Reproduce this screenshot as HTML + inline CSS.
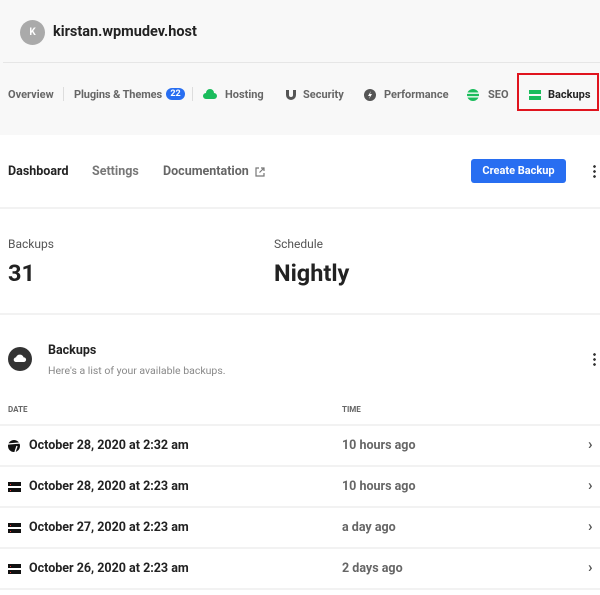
<!DOCTYPE html>
<html><head><meta charset="utf-8"><style>
*{margin:0;padding:0;box-sizing:border-box}
body{width:600px;height:590px;background:#f8f8f8;font-family:Roboto,"Liberation Sans",sans-serif;position:relative;overflow:hidden;color:#333}
.a{position:absolute;white-space:nowrap}
.nav{font-size:11px;font-weight:bold;color:#666;top:88px}
.card{position:absolute;left:0;top:135px;width:600px;height:460px;background:#fff}
.hl{position:absolute;left:0;width:600px;height:2px;background:#f2f2f2}
.row{font-size:12.5px;font-weight:bold;color:#222}
.tm{font-size:12.5px;font-weight:bold;color:#666;left:342px}
.chev{left:588px;font-size:15px;color:#555;font-weight:bold;margin-top:-3px}
</style></head><body>
<div class="a" style="left:20px;top:20px;width:25px;height:25px;border-radius:50%;background:#aaa;color:#fff;font-size:10px;font-weight:bold;text-align:center;line-height:25px">K</div>
<div class="a" style="left:53px;top:23px;font-size:14.5px;font-weight:bold;color:#222">kirstan.wpmudev.host</div>
<div style="position:absolute;left:3px;top:62px;width:597px;height:1px;background:#e6e6e6"></div>
<div class="a nav" style="left:8px">Overview</div>
<div class="a" style="left:63px;top:87px;width:1px;height:14px;background:#ddd"></div>
<div class="a nav" style="left:74px;letter-spacing:-0.1px">Plugins &amp; Themes</div>
<div class="a" style="left:166px;top:88px;width:19px;height:12px;border-radius:7px;background:#286ef1;color:#fff;font-size:9px;font-weight:bold;text-align:center;line-height:12px">22</div>
<div class="a" style="left:192px;top:87px;width:1px;height:14px;background:#ddd"></div>
<svg class="a" style="left:203px;top:89px" width="14" height="10" viewBox="0 0 14 10"><path d="M3 10a3 3 0 0 1 0-6 4 4 0 0 1 8 0 3 3 0 0 1 0 6z" fill="#1abc5c"/></svg>
<div class="a nav" style="left:225px">Hosting</div>
<svg class="a" style="left:285px;top:89px" width="12" height="12" viewBox="0 0 12 12"><path d="M1 1h3v5a2 2 0 0 0 4 0V1h3v5a5 5 0 0 1-10 0z" fill="#555"/></svg>
<div class="a nav" style="left:303px">Security</div>
<svg class="a" style="left:364px;top:89px" width="12" height="12"><circle cx="6" cy="6" r="6" fill="#555"/><path d="M7 2L4 7h2l-1 3 3-5H6z" fill="#fff"/></svg>
<div class="a nav" style="left:384px">Performance</div>
<svg class="a" style="left:467px;top:89px" width="12" height="12"><circle cx="6" cy="6" r="6" fill="#1abc5c"/><rect x="0" y="3.5" width="12" height="1.3" fill="#fff"/><rect x="0" y="7.2" width="12" height="1.3" fill="#fff"/></svg>
<div class="a nav" style="left:488px">SEO</div>
<div class="a" style="left:517px;top:73px;width:82px;height:38px;border:2px solid #e0141e"></div>
<svg class="a" style="left:529px;top:90px" width="12" height="10"><rect x="0" y="0" width="12" height="4" fill="#1abc5c"/><rect x="0" y="6" width="12" height="4" fill="#1abc5c"/></svg>
<div class="a nav" style="left:548px;color:#222">Backups</div>

<div class="card"></div>
<div class="a" style="left:8px;top:164px;font-size:12.5px;font-weight:bold;color:#222">Dashboard</div>
<div class="a" style="left:92px;top:164px;font-size:12.5px;font-weight:bold;color:#777">Settings</div>
<div class="a" style="left:163px;top:164px;font-size:12.5px;font-weight:bold;color:#666">Documentation</div>
<svg class="a" style="left:255px;top:167px" width="10" height="10" viewBox="0 0 10 10"><path d="M4 1H1v8h8V6M6 1h3v3M9 1L4.5 5.5" fill="none" stroke="#777" stroke-width="1.2"/></svg>
<div class="a" style="left:471px;top:159px;width:95px;height:24px;border-radius:3px;background:#286ef1;color:#fff;font-size:11px;font-weight:bold;text-align:center;line-height:24px">Create Backup</div>
<div class="a" style="left:593px;top:164px;width:3px;height:14px;background:radial-gradient(circle,#333 1.2px,transparent 1.5px) 0 0/3px 5px"></div>
<div class="hl" style="top:207px"></div>
<div class="a" style="left:8px;top:237px;font-size:12px;color:#555">Backups</div>
<div class="a" style="left:8px;top:259px;font-size:23.5px;font-weight:bold;color:#222">31</div>
<div class="a" style="left:274px;top:237px;font-size:12px;color:#555">Schedule</div>
<div class="a" style="left:274px;top:259px;font-size:23.5px;font-weight:bold;color:#222">Nightly</div>
<div class="hl" style="top:313px"></div>
<svg class="a" style="left:8px;top:347px" width="24" height="24"><circle cx="12" cy="12" r="12" fill="#333"/><path d="M8 15a2.3 2.3 0 0 1 0-4.6 4 4 0 0 1 7.6 0A2.3 2.3 0 0 1 16 15z" fill="#fff"/></svg>
<div class="a" style="left:48px;top:343px;font-size:12.5px;font-weight:bold;color:#222">Backups</div>
<div class="a" style="left:48px;top:364px;font-size:10.5px;color:#888">Here's a list of your available backups.</div>
<div class="a" style="left:593px;top:352px;width:3px;height:14px;background:radial-gradient(circle,#333 1.2px,transparent 1.5px) 0 0/3px 5px"></div>
<div class="a" style="left:8px;top:405px;font-size:8px;font-weight:bold;color:#666">DATE</div>
<div class="a" style="left:342px;top:405px;font-size:8px;font-weight:bold;color:#666">TIME</div>
<div class="hl" style="top:424px"></div>
<svg class="a" style="left:8px;top:440px" width="13" height="12"><circle cx="6" cy="6" r="6" fill="#111"/><path d="M0 4L12 3" stroke="#fff" stroke-width="1.3"/><path d="M9 6l-2 6" stroke="#fff" stroke-width="1.3"/></svg>
<div class="a row" style="left:29px;top:438px">October 28, 2020 at 2:32 am</div>
<div class="a tm" style="top:438px">10 hours ago</div>
<div class="a chev" style="top:438px">›</div>
<div class="hl" style="top:465px"></div>
<svg class="a" style="left:8px;top:482px" width="13" height="10"><rect width="13" height="4" fill="#111"/><rect y="6" width="13" height="4" fill="#111"/><rect x="2" y="2" width="1" height="1" fill="#e33"/><rect x="2" y="8" width="1" height="1" fill="#e33"/></svg>
<div class="a row" style="left:29px;top:479px">October 28, 2020 at 2:23 am</div>
<div class="a tm" style="top:479px">10 hours ago</div>
<div class="a chev" style="top:479px">›</div>
<div class="hl" style="top:506px"></div>
<svg class="a" style="left:8px;top:523px" width="13" height="10"><rect width="13" height="4" fill="#111"/><rect y="6" width="13" height="4" fill="#111"/><rect x="2" y="2" width="1" height="1" fill="#e33"/><rect x="2" y="8" width="1" height="1" fill="#e33"/></svg>
<div class="a row" style="left:29px;top:520px">October 27, 2020 at 2:23 am</div>
<div class="a tm" style="top:520px">a day ago</div>
<div class="a chev" style="top:520px">›</div>
<div class="hl" style="top:547px"></div>
<svg class="a" style="left:8px;top:564px" width="13" height="10"><rect width="13" height="4" fill="#111"/><rect y="6" width="13" height="4" fill="#111"/><rect x="2" y="2" width="1" height="1" fill="#e33"/><rect x="2" y="8" width="1" height="1" fill="#e33"/></svg>
<div class="a row" style="left:29px;top:561px">October 26, 2020 at 2:23 am</div>
<div class="a tm" style="top:561px">2 days ago</div>
<div class="a chev" style="top:561px">›</div>
<div class="hl" style="top:588px"></div>
</body></html>
